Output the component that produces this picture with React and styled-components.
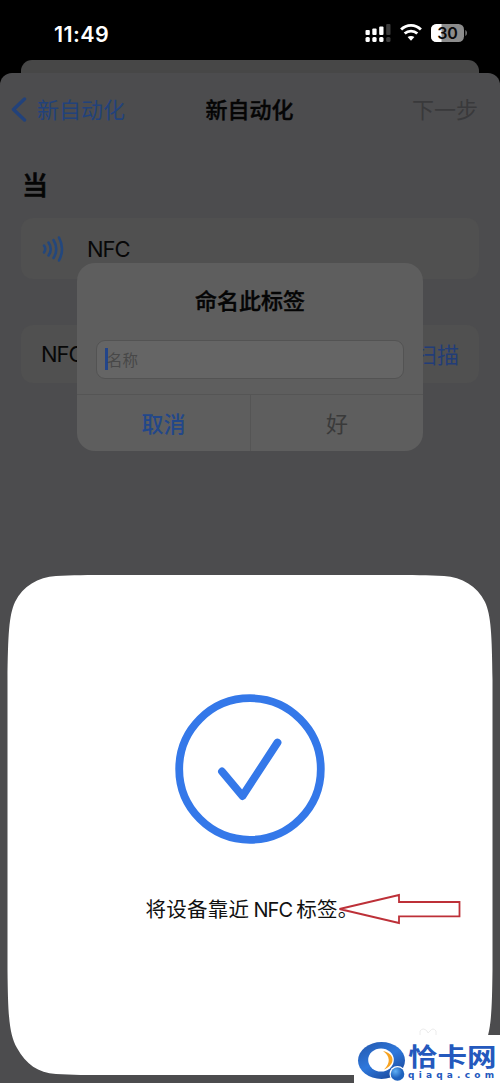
import React from 'react';
import styled, { createGlobalStyle } from 'styled-components';

const BLUE = '#3478e9';
const DIM_BLUE = '#22427b';
const FONT = `Inter, "Noto Sans CJK SC", sans-serif`;

const GlobalStyle = createGlobalStyle`
    * {
        box-sizing: border-box;
    }

    body {
        margin: 0;
        background: #000;
        font-family: ${FONT};
    }
`;

const Screen = styled.div`
    position: relative;
    width: 500px;
    height: 1083px;
    overflow: hidden;
    display: flex;
    flex-direction: column;
    background: #000;
`;

const StatusBar = styled.header`
    flex: 0 0 60px;
    display: flex;
    justify-content: space-between;
    padding: 22px 32px 0 54px;
    color: #fff;
`;

const Time = styled.span`
    font-size: 21.5px;
    line-height: 24px;
    font-weight: 600;
    letter-spacing: 0.4px;
`;

const StatusIcons = styled.div`
    display: flex;
    align-items: flex-start;
    gap: 9px;
    padding-top: 1px;

    & svg {
        display: block;
    }
`;

const BackCard = styled.div`
    flex: 0 0 13px;
    margin: 0 21px;
    background: #474747;
    border-radius: 11px 11px 0 0;
`;

const Page = styled.main`
    flex: 1;
    background: #4c4c4e;
    border-radius: 12px 12px 0 0;
`;

const NavBar = styled.nav`
    display: grid;
    grid-template-columns: 1fr auto 1fr;
    align-items: center;
    height: 73px;
    padding: 0 22px 0 11px;
    font-size: 22px;
    line-height: 30px;
`;

const BackButton = styled.div`
    display: flex;
    align-items: center;
    gap: 10px;
    color: ${DIM_BLUE};
`;

const NavTitle = styled.h1`
    margin: 0 0 0 10px;
    font-size: 22px;
    font-weight: 500;
    color: #050505;
    -webkit-text-stroke: 0.4px #050505;
`;

const NextButton = styled.span`
    text-align: right;
    color: #39393b;
`;

const SectionTitle = styled.h2`
    margin: 20px 0 12px 22px;
    font-size: 26px;
    line-height: 40px;
    font-weight: 500;
    color: #050505;
    -webkit-text-stroke: 0.6px #050505;
`;

const ListRow = styled.div`
    display: flex;
    align-items: center;
    height: ${({ $height }) => $height}px;
    margin: 0 21px ${({ $gap }) => $gap || 0}px;
    padding: 0 20px;
    border-radius: 12px;
    background: #505050;
    font-size: 22px;
    letter-spacing: -1px;
    color: #080808;
`;

const RowLabel = styled.span`
    margin-left: ${({ $indent }) => $indent || 0}px;
`;

const RowAction = styled.span`
    margin: 0 0 2px auto;
    letter-spacing: 0;
    color: #223d78;
`;

const Dialog = styled.section`
    position: absolute;
    left: 77px;
    top: 263px;
    width: 346px;
    height: 188px;
    display: flex;
    flex-direction: column;
    background: #5e5e5e;
    border-radius: 18px;
`;

const DialogTitle = styled.h3`
    margin: 22px 0 0;
    font-size: 22px;
    line-height: 32px;
    font-weight: 500;
    text-align: center;
    color: #050505;
    -webkit-text-stroke: 0.4px #050505;
`;

const NameField = styled.div`
    display: flex;
    align-items: center;
    height: 39px;
    margin: 23px 19px 15px;
    padding: 0 0 1px 8px;
    border: 1px solid #535353;
    border-radius: 9px;
    background: #656565;
    font-size: 15.5px;
    color: #484848;
`;

const Caret = styled.i`
    width: 3px;
    height: 22px;
    background: #23458a;
`;

const Placeholder = styled.span`
    margin-left: -1px;
`;

const DialogButtons = styled.div`
    flex: 1;
    display: grid;
    grid-template-columns: 1fr 1fr;
    border-top: 1px solid #555;
`;

const DialogButton = styled.div`
    display: flex;
    align-items: center;
    justify-content: center;
    padding-bottom: 2px;
    font-size: 22px;
    font-weight: ${({ $primary }) => ($primary ? 500 : 400)};
    color: ${({ $primary }) => ($primary ? '#22478a' : '#3a3a3a')};

    & + & {
        border-left: 1px solid #555;
    }
`;

const Sheet = styled.section`
    position: absolute;
    left: 7px;
    top: 575px;
    width: 486px;
    height: 500px;
    display: flex;
    flex-direction: column;
    align-items: center;
    padding-top: 119px;
    background: #fff;
    clip-path: path('M.5 105 C1 60 2 40 8 27 C16 11 31 2 49 1 C65 0 80 0 105 0 H381 C406 0 421 0 437 1 C455 2 470 11 478 27 C484 40 485 60 485.500 105 V395 C485 440 484 459 476 473 C467 489 455 498 437 499 C421 500 406 500 381 500 H105 C80 500 65 500 49 499 C31 498 19 489 10 473 C2 459 1 440 .5 395 Z');
`;

const SheetText = styled.p`
    display: flex;
    align-items: center;
    gap: 4px;
    margin: 51px 0 0 4px;
    font-size: 20.5px;
    line-height: 30px;
    letter-spacing: 0.3px;
    white-space: nowrap;
    color: #111;
`;

const Latin = styled.span`
    font-size: 20px;
    letter-spacing: -0.9px;
`;

const Pointer = styled.svg`
    position: absolute;
    left: 336px;
    top: 892px;
`;

const Watermark = styled.footer`
    position: absolute;
    right: 0;
    bottom: 0;
    width: 146px;
    height: 48px;
    display: flex;
    background: #fff;
    color: #2459bd;
`;

const Brand = styled.div`
    width: 92px;
    padding-top: 3px;
`;

const BrandName = styled.div`
    height: 32px;
    font: 700 29.500px/36px "Noto Sans CJK SC", sans-serif;
    white-space: nowrap;
    transform: scaleY(0.83);
`;

const BrandUrl = styled.div`
    font: 700 9px/10px "DejaVu Sans", sans-serif;
    letter-spacing: 4.2px;
    white-space: nowrap;
`;

const Ghost = styled.svg`
    position: absolute;
    left: 418px;
    top: 1027px;
`;

const SignalIcon = () => (
    <svg width="26" height="20" viewBox="0 0 26 20" fill="#fff">
        <rect x="0.500" y="7" width="4.300" height="5" rx="1" />
        <rect x="7.300" y="5.500" width="4.300" height="6.500" rx="1" />
        <rect x="14.200" y="3.500" width="4.300" height="8.500" rx="1" />
        <rect x="21.200" y="1" width="4.300" height="11" rx="1" fill="#3b3b3b" />
        <rect x="0.500" y="14" width="4.300" height="5" rx="1.500" />
        <rect x="7.300" y="14" width="4.300" height="5" rx="1.500" />
        <rect x="14.200" y="14" width="4.300" height="5" rx="1.500" />
        <rect x="21.200" y="14" width="4.300" height="5" rx="1.500" fill="#3b3b3b" />
    </svg>
);

const WifiIcon = () => (
    <svg width="22" height="18" viewBox="0 0 22 18" fill="none" stroke="#fff" strokeWidth="2.800">
        <path d="M1.100 6.600C6.600 1 15.400 1 20.900 6.600" />
        <path d="M4.700 10.600C8.200 7.200 13.800 7.200 17.300 10.600" />
        <path d="M11 17.800L7.600 14.100C9.400 12.600 12.600 12.600 14.400 14.100Z" fill="#fff" stroke="none" />
    </svg>
);

const BatteryIcon = () => (
    <svg width="37" height="20" viewBox="0 0 37 20">
        <defs>
            <clipPath id="battery">
                <rect x="0" y="1" width="33" height="18" rx="5.500" />
            </clipPath>
        </defs>
        <g clipPath="url(#battery)">
            <rect width="33" height="20" fill="#8c8c8c" />
            <rect width="10.500" height="20" fill="#fff" />
        </g>
        <path d="M34.300 7V13C36.500 12 36.500 8 34.300 7Z" fill="#777" />
        <text x="16.500" y="15.800" textAnchor="middle" fontSize="16" fontWeight="600" fontFamily="Inter" fill="#0a0a0a">30</text>
    </svg>
);

const NfcIcon = () => (
    <svg width="24" height="28" viewBox="0 0 24 28" fill="none" stroke="#23477d" strokeWidth="2.600" strokeLinecap="round">
        <path d="M3 10.500Q5.500 14 3 17.500" />
        <path d="M7.500 7.500Q12 14 7.500 20.500" />
        <path d="M12.500 5Q18 14 12.500 23" />
        <path d="M18 2.500Q24 14 18 25.500" />
    </svg>
);

const SuccessIcon = () => (
    <svg width="150" height="150" viewBox="0 0 150 150" fill="none" stroke={BLUE} strokeWidth="7.800">
        <circle cx="75" cy="75" r="70.800" />
        <path d="M47 77.500L67.500 102L102.500 48.500" strokeLinecap="round" strokeLinejoin="round" />
    </svg>
);

const BrandLogo = () => (
    <svg width="54" height="48" viewBox="0 0 54 48">
        <defs>
            <linearGradient id="ring" x1="0" y1="0" x2="0.700" y2="1">
                <stop offset="0" stopColor="#2456aa" />
                <stop offset="0.550" stopColor="#2e78dc" />
                <stop offset="1" stopColor="#1b4a9e" />
            </linearGradient>
            <radialGradient id="ball" cx="0.350" cy="0.300">
                <stop offset="0" stopColor="#5fb0f5" />
                <stop offset="1" stopColor="#1f62bd" />
            </radialGradient>
        </defs>
        <ellipse cx="27.500" cy="25.500" rx="23.500" ry="18.500" fill="url(#ring)" />
        <ellipse cx="27" cy="25" rx="12.800" ry="11.500" fill="#fff" />
        <path d="M29 16C40 18 43 29 30 34.500C37 28 36 21 29 16Z" fill="#f7a321" />
        <circle cx="43.500" cy="39" r="8" fill="#fff" />
        <circle cx="43.500" cy="39" r="6.800" fill="url(#ball)" />
    </svg>
);

const App = () => {
    return (
        <Screen>
            <GlobalStyle />
            <StatusBar>
                <Time>11:49</Time>
                <StatusIcons>
                    <SignalIcon />
                    <WifiIcon />
                    <BatteryIcon />
                </StatusIcons>
            </StatusBar>
            <BackCard />
            <Page>
                <NavBar>
                    <BackButton>
                        <svg width="16" height="26" viewBox="0 0 16 26" fill="none" stroke={DIM_BLUE} strokeWidth="3.400" strokeLinecap="round" strokeLinejoin="round">
                            <path d="M13.500 2L2.500 12.500L13.500 23" />
                        </svg>
                        新自动化
                    </BackButton>
                    <NavTitle>新自动化</NavTitle>
                    <NextButton>下一步</NextButton>
                </NavBar>
                <SectionTitle>当</SectionTitle>
                <ListRow $height={61} $gap={46}>
                    <NfcIcon />
                    <RowLabel $indent={22}>NFC</RowLabel>
                </ListRow>
                <ListRow $height={58}>
                    <RowLabel>NFC</RowLabel>
                    <RowAction>扫描</RowAction>
                </ListRow>
            </Page>
            <Dialog>
                <DialogTitle>命名此标签</DialogTitle>
                <NameField>
                    <Caret />
                    <Placeholder>名称</Placeholder>
                </NameField>
                <DialogButtons>
                    <DialogButton $primary>取消</DialogButton>
                    <DialogButton>好</DialogButton>
                </DialogButtons>
            </Dialog>
            <Sheet>
                <SuccessIcon />
                <SheetText>
                    <span>将设备靠近</span>
                    <Latin>NFC</Latin>
                    <span>标签。</span>
                </SheetText>
            </Sheet>
            <Pointer width="128" height="34" viewBox="0 0 128 34" fill="none" stroke="#bd3038" strokeWidth="1.800">
                <path d="M3.500 17L63 3V10H123.500V24.300H63V31Z" />
            </Pointer>
            <Ghost width="20" height="8" viewBox="0 0 20 8" fill="none" stroke="#ececec">
                <path d="M2 8V4Q5 0 9 4L10 6L12 4Q15 0 18 4V8" />
            </Ghost>
            <Watermark>
                <BrandLogo />
                <Brand>
                    <BrandName>恰卡网</BrandName>
                    <BrandUrl>qiaqa.com</BrandUrl>
                </Brand>
            </Watermark>
        </Screen>
    );
};

export default App;
